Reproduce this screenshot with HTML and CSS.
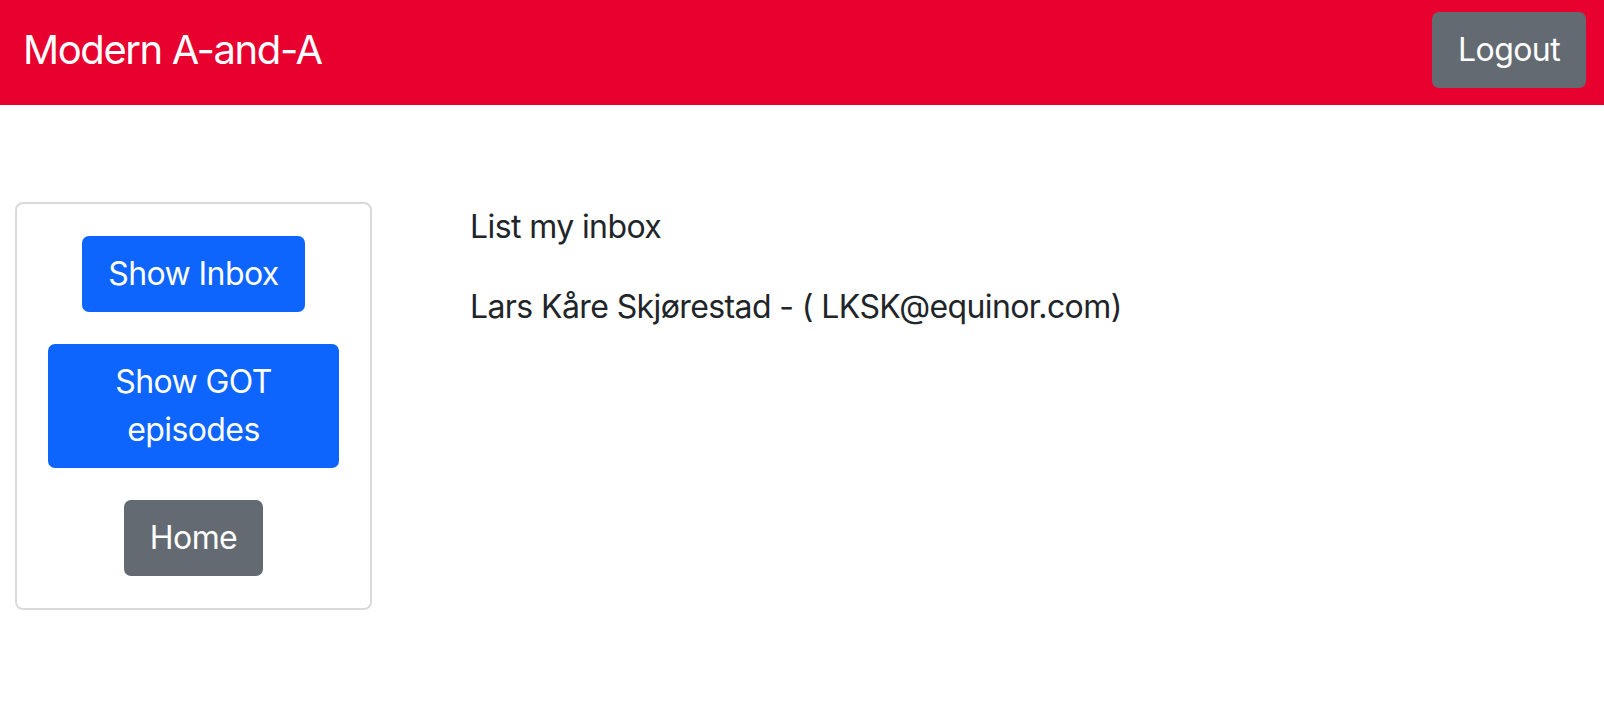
FILE: index.html
```html
<!DOCTYPE html>
<html lang="en">
<head>
<meta charset="utf-8">
<title>Modern A-and-A</title>
<link rel="stylesheet" href="styles.css">
</head>
<body>
<nav class="navbar">
  <span class="brand">Modern A-and-A</span>
  <button class="btn btn-secondary">Logout</button>
</nav>
<main class="content">
  <aside class="side-card">
    <button class="btn btn-primary">Show Inbox</button>
    <button class="btn btn-primary">Show GOT episodes</button>
    <button class="btn btn-secondary">Home</button>
  </aside>
  <section class="main-col">
    <p>List my inbox</p>
    <p>Lars Kåre Skjørestad - ( LKSK@equinor.com)</p>
  </section>
</main>
</body>
</html>
```
FILE: styles.css
```css
* { box-sizing: border-box; }
body {
  margin: 0;
  font-family: Inter, "Noto Sans", "Liberation Sans", sans-serif;
  color: #212529;
  background: #fff;
}
.navbar {
  height: 105px;
  background: #e8002f;
  display: flex;
  align-items: center;
  justify-content: space-between;
  padding: 0 18px 5px 23px;
}
.brand {
  color: #fff;
  font-size: 40px;
  line-height: 60px;
  letter-spacing: -1.4px;
}
.btn {
  font-family: inherit;
  font-size: 32px;
  line-height: 48px;
  letter-spacing: -0.6px;
  padding: 12px 24px;
  border: 2px solid transparent;
  border-radius: 7px;
  color: #fff;
  text-align: center;
  cursor: pointer;
}
.btn-primary { background: #0d65fe; border-color: #0d65fe; }
.btn-secondary { background: #636a72; border-color: #636a72; }
.content {
  display: flex;
  align-items: flex-start;
  padding-top: 97px;
}
.side-card {
  margin-left: 15px;
  width: 357px;
  border: 2px solid #dadada;
  border-radius: 8px;
  padding: 32px 31px;
  display: flex;
  flex-direction: column;
  align-items: center;
  gap: 32px;
}
.main-col {
  margin-left: 98px;
  padding-top: 1px;
}
.main-col p {
  margin: 0 0 32px;
  font-size: 32px;
  line-height: 48px;
  letter-spacing: -0.6px;
}
```
